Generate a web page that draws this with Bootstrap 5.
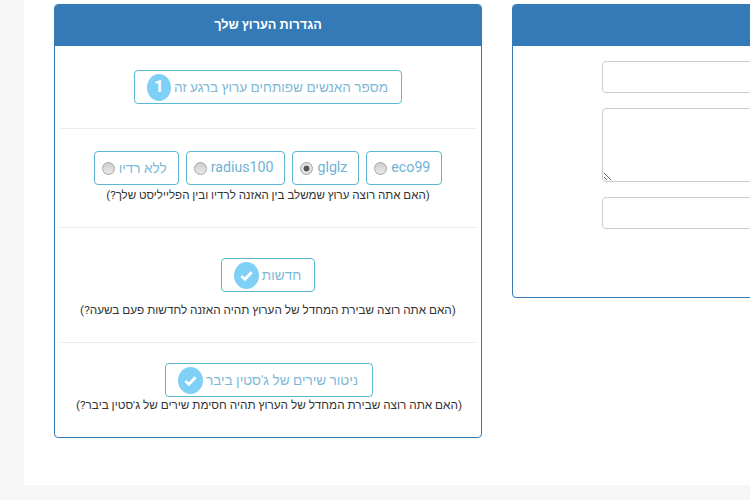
<!DOCTYPE html>
<html lang="he">
<head>
<meta charset="utf-8">
<title>הגדרות הערוץ</title>
<link href="https://cdn.jsdelivr.net/npm/bootstrap@5.3.0/dist/css/bootstrap.min.css" rel="stylesheet">
<style>
html,body{height:500px;overflow:hidden;background:#f7f7f7;font-family:Roboto,"Liberation Sans",sans-serif;}
.sheet{margin-left:24px;width:726px;height:485px;background:#fff;padding:4px 0 0 30px;overflow:hidden;}
.pane{border:1px solid #337ab7;border-radius:4px;background:#fff;flex:none;overflow:hidden;}
.pane-main{width:428px;height:434px;}
.pane-side{width:420px;height:294px;margin-left:30px;}
.pane-head{height:41px;background:#337ab7;color:#fff;font-size:12.7px;font-weight:700;line-height:40px;text-align:center;}
.zone{margin:0 4px;border-bottom:1px solid #eee;}
.zone:last-child{border-bottom:0;}
.zone-a{height:83px;padding-top:24px;}
.zone-b{height:99px;padding-top:22px;}
.zone-c{height:115px;padding-top:30px;}
.zone-d{padding-top:20px;}
.pill{display:inline-flex;align-items:center;height:34px;border:1px solid #5bb7d2;border-radius:4px;padding:0 13px 0 12px;color:#7db9d6;font-size:13.6px;background:#fff;white-space:nowrap;}
.pill-sm{padding:0 11px 0 7px;}
.pill-latin{font-size:14.2px;color:#6fb3d6;}
.pill-wide{padding-right:14px;margin-left:2px;}
.dot{display:flex;align-items:center;justify-content:center;width:25px;height:27px;border-radius:50%;background:#7fd0f7;color:#fff;font-size:17px;font-weight:700;margin-right:3px;flex:none;}
.dot-num{width:24px;}
.check{width:15px;height:15px;}
.radio{width:13px;height:13px;border-radius:50%;border:1px solid #a4a4a4;background:linear-gradient(#cfcfcf,#e8e8e8);margin-right:4px;flex:none;}
.radio-on{background:radial-gradient(circle,#555 0 2.7px,#e0e0e0 3.2px);}
.hint{font-size:11.75px;line-height:17px;color:#333;white-space:nowrap;margin-top:1px;}
.zone-b .hint{font-size:11.55px;margin-top:2px;}
.zone-c .hint{margin-top:10px;}
.zone-d .hint{margin-top:0;padding-left:2px;}
.field{display:block;height:32px;border:1px solid #ccc;border-radius:4px;margin-left:89px;width:320px;background:#fff;padding:0;}
.field-tall{height:74px;margin-top:15px;margin-bottom:15px;resize:both;}
.side-body{padding-top:15px;}
.row-gap{gap:7px;}
</style>
</head>
<body>
<div class="sheet d-flex align-items-start">
  <section class="pane pane-main" dir="rtl">
    <div class="pane-head">הגדרות הערוץ שלך</div>
    <div class="zone zone-a text-center">
      <span class="pill">מספר האנשים שפותחים ערוץ ברגע זה<span class="dot dot-num">1</span></span>
    </div>
    <div class="zone zone-b text-center">
      <div class="d-flex justify-content-center row-gap">
        <label class="pill pill-sm pill-latin">eco99<span class="radio"></span></label>
        <label class="pill pill-sm pill-latin">glglz<span class="radio radio-on"></span></label>
        <label class="pill pill-sm pill-latin">radius100<span class="radio"></span></label>
        <label class="pill pill-sm">ללא רדיו<span class="radio"></span></label>
      </div>
      <div class="hint">(האם אתה רוצה ערוץ שמשלב בין האזנה לרדיו ובין הפלייליסט שלך?)</div>
    </div>
    <div class="zone zone-c text-center">
      <span class="pill">חדשות<span class="dot"><svg class="check" viewBox="0 0 16 16"><path d="M2.5 8.5 6.3 12 13.5 4.5" fill="none" stroke="#fff" stroke-width="3"/></svg></span></span>
      <div class="hint">(האם אתה רוצה שבירת המחדל של הערוץ תהיה האזנה לחדשות פעם בשעה?)</div>
    </div>
    <div class="zone zone-d text-center">
      <span class="pill pill-wide">ניטור שירים של ג'סטין ביבר<span class="dot"><svg class="check" viewBox="0 0 16 16"><path d="M2.5 8.5 6.3 12 13.5 4.5" fill="none" stroke="#fff" stroke-width="3"/></svg></span></span>
      <div class="hint">(האם אתה רוצה שבירת המחדל של הערוץ תהיה חסימת שירים של ג'סטין ביבר?)</div>
    </div>
  </section>
  <section class="pane pane-side">
    <div class="pane-head"></div>
    <div class="side-body">
      <input class="field" type="text" aria-label="שם">
      <textarea class="field field-tall" dir="rtl" aria-label="תיאור"></textarea>
      <input class="field" type="text" aria-label="תגיות">
    </div>
  </section>
</div>
<script src="https://cdn.jsdelivr.net/npm/bootstrap@5.3.0/dist/js/bootstrap.bundle.min.js"></script>
</body>
</html>
